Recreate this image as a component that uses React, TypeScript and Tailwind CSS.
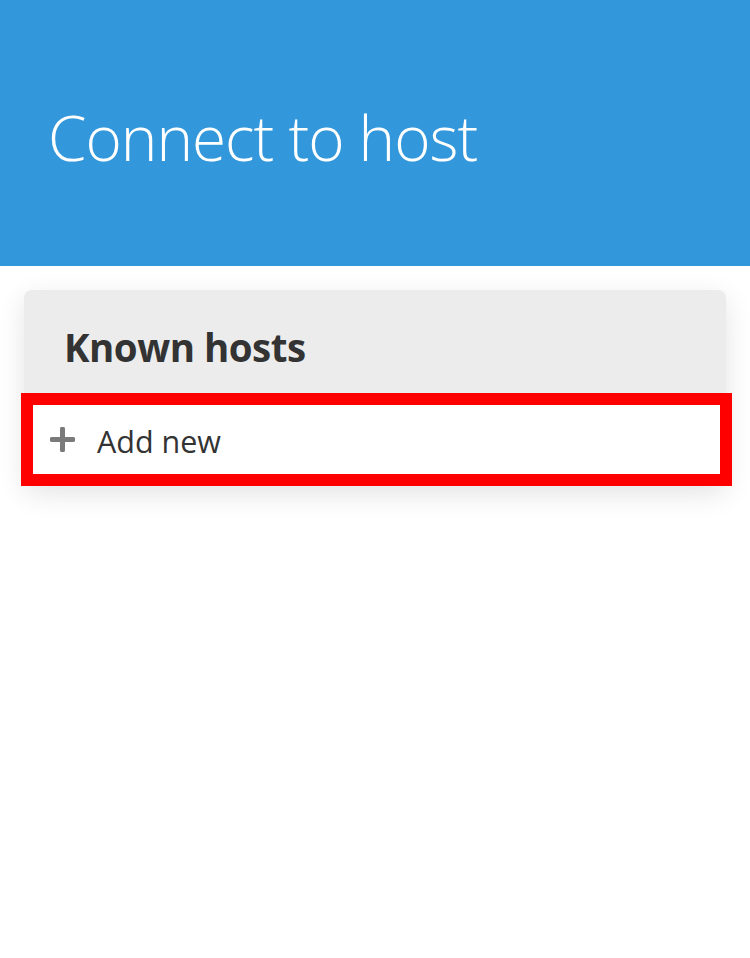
export default function App() {
  return (
    <div className="min-h-screen bg-white font-['Open_Sans','Noto_Sans',sans-serif]">
      {/* header */}
      <header className="h-[266px] bg-[#3398db] pl-[48px] pt-[106px]">
        <h1 className="text-[62px] font-light leading-none tracking-[-1px] text-white">Connect to host</h1>
      </header>

      <main className="px-6 pt-6">
        <section className="rounded-lg bg-white shadow-[0_8px_28px_rgba(0,0,0,0.11)]">
          <div className="h-[103px] rounded-t-lg bg-[#ececec] pl-[40px] pt-[38px]">
            <h2 className="text-[38.5px] font-bold leading-none tracking-[-0.5px] text-[#333]">Known hosts</h2>
          </div>

          <div className="relative flex h-[93px] items-center pl-[26px]">
            <svg width="25" height="25" viewBox="0 0 25 25">
              <path d="M12.5 2v21M2 12.5h21" stroke="#7a7a7a" strokeWidth="5" strokeLinecap="round" />
            </svg>
            <span className="ml-[22px] mt-[3px] text-[30.5px] leading-none text-[#333]">Add new</span>
            {/* highlight */}
            <div className="pointer-events-none absolute -left-[3px] -right-[6px] top-0 bottom-0 border-[12px] border-[#ff0000]" />
          </div>
        </section>
      </main>
    </div>
  );
}
